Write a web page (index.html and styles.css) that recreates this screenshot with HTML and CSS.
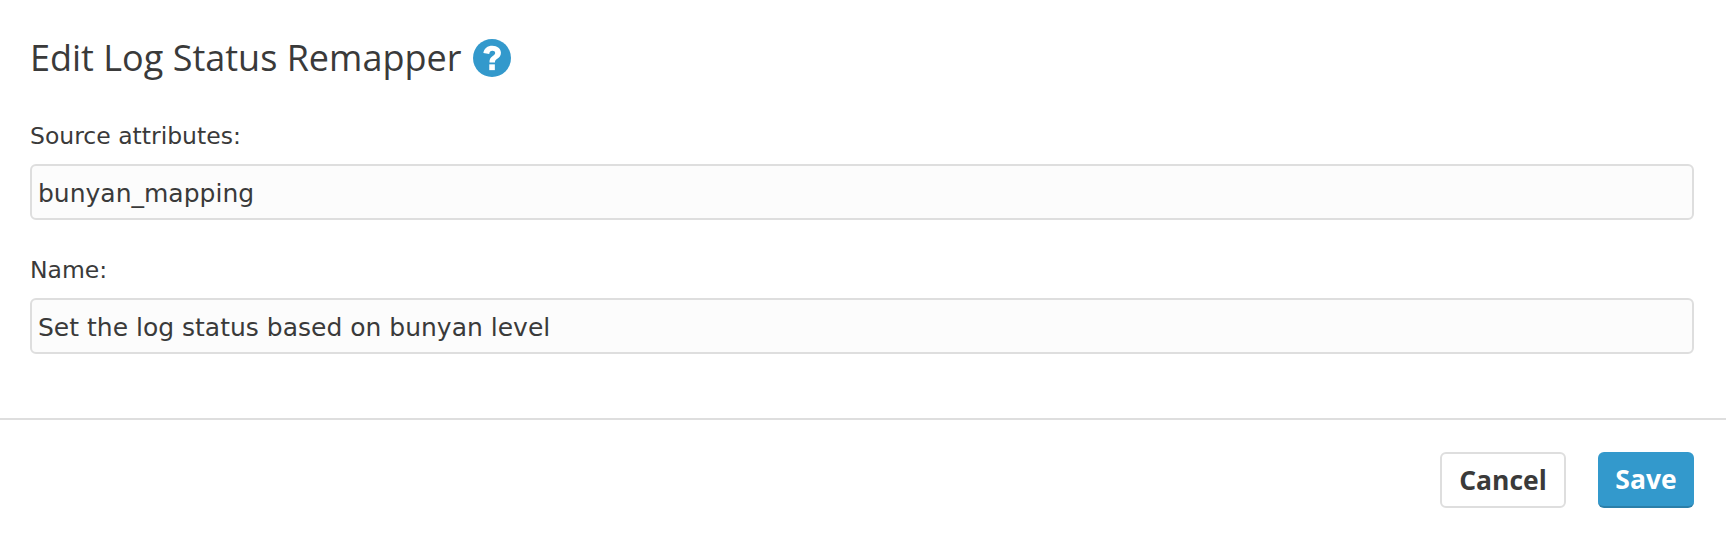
FILE: index.html
```html
<!DOCTYPE html>
<html lang="en">
<head>
  <meta charset="UTF-8">
  <title>Edit Log Status Remapper</title>
  <link rel="stylesheet" href="styles.css">
</head>
<body>
  <div class="modal">
    <div class="modal-body">
      <h1 class="title">Edit Log Status Remapper
        <svg class="help-icon" viewBox="0 0 36 36" width="38" height="38">
          <circle cx="18" cy="18" r="18" fill="#3399cc"/>
          <path d="M9.800 13.200c.6-4.400 3.900-6.900 8.500-6.900 4.800 0 8.200 2.800 8.200 6.800 0 3-1.700 4.500-3.500 5.700-1.500 1-2.200 1.700-2.200 3.400h-5.200c-.1-3.200 1-4.800 3.100-6.200 1.500-1 2.300-1.700 2.300-2.800 0-1.300-1.100-2.100-2.600-2.100-1.700 0-2.800 1.100-3 3z" fill="#fff"/>
          <rect x="15.400" y="24" width="5.300" height="5.500" fill="#fff"/>
        </svg>
      </h1>
      <div class="field">
        <label class="field-label">Source attributes:</label>
        <input class="field-input" type="text" value="bunyan_mapping">
      </div>
      <div class="field">
        <label class="field-label">Name:</label>
        <input class="field-input" type="text" value="Set the log status based on bunyan level">
      </div>
    </div>
    <div class="modal-footer">
      <button class="button button-cancel">Cancel</button>
      <button class="button button-save">Save</button>
    </div>
  </div>
</body>
</html>
```

FILE: styles.css
```css
body {
  margin: 0;
  background: #fff;
  color: #3a3a3a;
  font-family: "DejaVu Sans", sans-serif;
}

.modal-body {
  padding: 36px 32px 0 30px;
  height: 380px;
  box-sizing: border-box;
}

.title {
  display: flex;
  align-items: center;
  gap: 12px;
  margin: 0 0 41px;
  font-family: "Open Sans", sans-serif;
  font-size: 36px;
  font-weight: 400;
  line-height: 44px;
}

.field {
  margin-bottom: 35px;
}

.field-label {
  display: block;
  margin-bottom: 13px;
  font-size: 23.5px;
  line-height: 30px;
}

.field-input {
  display: block;
  width: 100%;
  height: 56px;
  box-sizing: border-box;
  padding: 2px 6px 0;
  background: #fcfcfc;
  border: 2px solid #dedede;
  border-radius: 6px;
  color: #3a3a3a;
  font-family: "DejaVu Sans", sans-serif;
  font-size: 25px;
}

.modal-footer {
  display: flex;
  justify-content: flex-end;
  gap: 32px;
  margin-top: 38px;
  padding: 32px 32px 0 0;
  border-top: 2px solid #dedede;
}

.button {
  height: 56px;
  box-sizing: border-box;
  border-radius: 6px;
  font-family: "Open Sans", sans-serif;
  font-size: 26.5px;
  font-weight: 700;
}

.button-cancel {
  width: 126px;
  background: #fff;
  border: 2px solid #dedede;
  color: #3a3a3a;
}

.button-save {
  width: 96px;
  background: #3399cc;
  border: 0;
  border-bottom: 2px solid #2b7fa9;
  color: #fff;
}
```
